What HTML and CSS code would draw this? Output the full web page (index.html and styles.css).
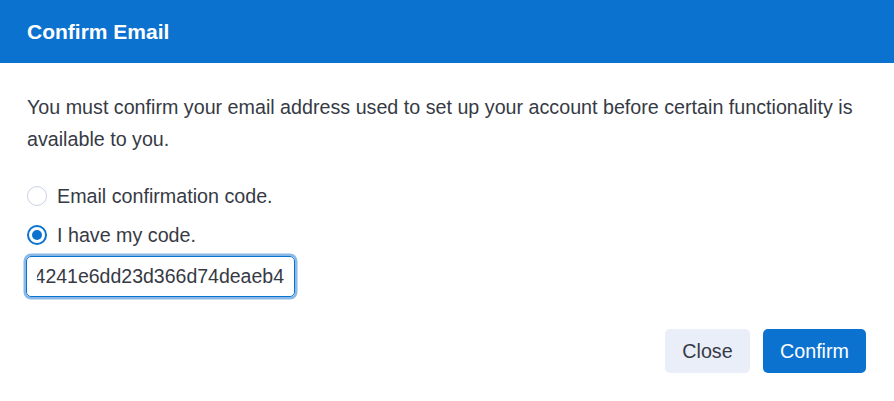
FILE: index.html
```html
<!DOCTYPE html>
<html>
<head>
<meta charset="utf-8">
<link rel="stylesheet" href="styles.css">
</head>
<body>
<div class="dialog">
  <div class="header">Confirm Email</div>
  <div class="body">
    <p class="intro">You must confirm your email address used to set up your account before certain functionality is available to you.</p>
    <label class="option"><span class="radio"></span><span>Email confirmation code.</span></label>
    <label class="option"><span class="radio checked"></span><span>I have my code.</span></label>
    <div class="code-input"><div class="code-clip"><span class="code-text">8f3c9a1b7e5d4241e6dd23d366d74deaeb4</span></div></div>
  </div>
  <div class="footer">
    <button class="btn btn-secondary">Close</button>
    <button class="btn btn-primary">Confirm</button>
  </div>
</div>
</body>
</html>
```
FILE: styles.css
```css
* { box-sizing: border-box; }
html, body { margin: 0; padding: 0; background: #fff; }
body { font-family: "Liberation Sans", Arial, sans-serif; color: #363a45; }
.dialog { width: 894px; height: 401px; display: flex; flex-direction: column; }
.header {
  height: 63px;
  background: #0b72d0;
  color: #fff;
  font-weight: bold;
  font-size: 21px;
  padding: 0 27px;
  display: flex;
  align-items: center;
}
.body { padding: 28px 27px 0; }
.intro { margin: 0 0 25px; font-size: 19.7px; line-height: 32px; }
.option { display: flex; align-items: center; gap: 10px; font-size: 19.7px; height: 32px; margin-bottom: 7px; }
.radio {
  width: 20px; height: 20px; border-radius: 50%;
  border: 1px solid #c9d1e3; background: #fff; flex: none;
  display: flex; align-items: center; justify-content: center;
}
.radio.checked { border: 2px solid #0b72d0; }
.radio.checked::after { content: ""; width: 10px; height: 10px; border-radius: 50%; background: #0b72d0; }
.code-input {
  width: 269px; height: 41px;
  margin-left: -1px; margin-top: -2px;
  border: 1.5px solid #0b72d0;
  border-radius: 5px;
  box-shadow: 0 0 0 2.5px #8ab9e8;
  display: flex; align-items: center;
  padding: 0 10px;
  font-size: 19.5px; color: #363a45;
}
.code-clip { flex: 1; min-width: 0; display: flex; justify-content: flex-end; overflow: hidden; white-space: nowrap; }
.code-text { flex: none; }
.footer { display: flex; justify-content: flex-end; gap: 13px; padding: 32px 28px 0; }
.btn {
  font-family: "Liberation Sans", Arial, sans-serif;
  font-size: 19.7px; height: 44px; border: none; border-radius: 5px;
  padding: 0; cursor: pointer;
}
.btn-secondary { background: #eaeef8; color: #363a45; width: 85px; }
.btn-primary { background: #0b72d0; color: #fff; width: 103px; }
```
